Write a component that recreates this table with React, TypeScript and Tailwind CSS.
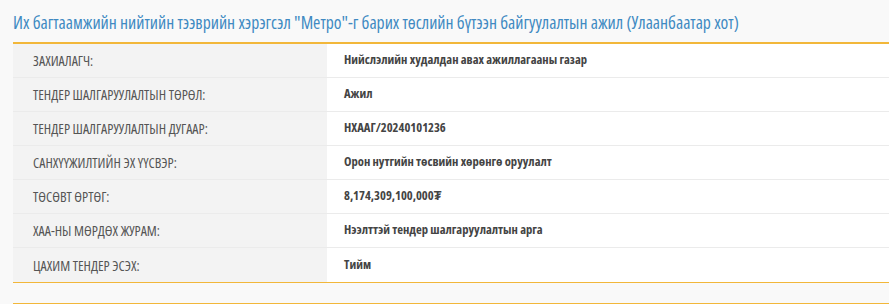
import React from 'react';

const rows = [
    { label: 'ЗАХИАЛАГЧ:', value: 'Нийслэлийн худалдан авах ажиллагааны газар' },
    { label: 'ТЕНДЕР ШАЛГАРУУЛАЛТЫН ТӨРӨЛ:', value: 'Ажил' },
    { label: 'ТЕНДЕР ШАЛГАРУУЛАЛТЫН ДУГААР:', value: 'НХААГ/20240101236' },
    { label: 'САНХҮҮЖИЛТИЙН ЭХ ҮҮСВЭР:', value: 'Орон нутгийн төсвийн хөрөнгө оруулалт' },
    { label: 'ТӨСӨВТ ӨРТӨГ:', value: '8,174,309,100,000₮' },
    { label: 'ХАА-НЫ МӨРДӨХ ЖУРАМ:', value: 'Нээлттэй тендер шалгаруулалтын арга' },
    { label: 'ЦАХИМ ТЕНДЕР ЭСЭХ:', value: 'Тийм' },
];

const App = () => {
    return (
        <div
            className="min-h-[304px] w-[889px] overflow-hidden bg-[#f9f9f9] pl-[13px] font-stretch-condensed"
            style={{ fontFamily: "'Open Sans', 'Liberation Sans', sans-serif" }}
        >
            <h2 className="pt-[11px] pb-[8px] text-[17.6px] leading-[23px] text-[#408ac2] whitespace-nowrap">
                Их багтаамжийн нийтийн тээврийн хэрэгсэл "Метро"-г барих төслийн бүтээн байгуулалтын ажил (Улаанбаатар хот)
            </h2>
            <div className="border-t-2 border-b border-[#f2b73a]">
                {rows.map((row, i) => (
                    <div
                        key={row.label}
                        className={`flex h-[34px] ${i < rows.length - 1 ? 'border-b border-[#ebebeb]' : ''}`}
                    >
                        <div className="flex w-[314px] shrink-0 items-center bg-[#f3f3f3] pl-[20px] text-[14px] text-[#555555]">
                            {row.label}
                        </div>
                        <div className="flex flex-1 items-center bg-white pl-[17px] text-[12.6px] font-bold text-[#444444]">
                            {row.value}
                        </div>
                    </div>
                ))}
            </div>
            <div className="mt-[20px] border-t border-[#f2b73a]" />
        </div>
    );
};

export default App;
